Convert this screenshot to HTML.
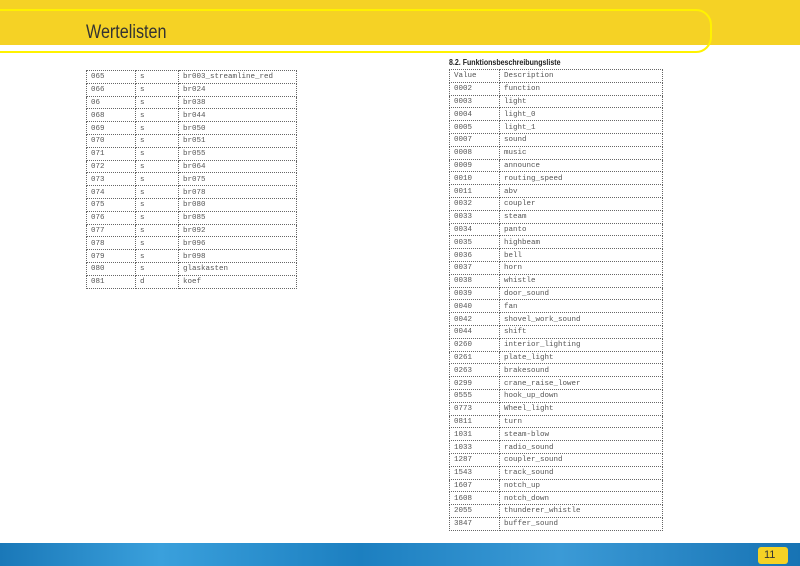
<!DOCTYPE html>
<html><head><meta charset="utf-8"><style>
body{margin:0;width:800px;height:566px;position:relative;overflow:hidden;background:#fff;font-family:"Liberation Mono",monospace;}
.band{position:absolute;left:0;top:0;width:800px;height:45px;background:#f5d225;}
.outline{position:absolute;left:-20px;top:9px;width:728px;height:40px;border:2px solid #fff200;border-radius:16px;}
.title{position:absolute;left:86px;top:22px;font-family:"Liberation Sans",sans-serif;font-size:19px;color:#333;transform:scaleX(0.85);transform-origin:left top;}
table{position:absolute;border-collapse:collapse;font-size:7.5px;color:#555;}
td{border:1px dotted #666;height:10.8px;padding:1px 0 0 4px;line-height:10px;vertical-align:middle;}
.h{position:absolute;left:449px;top:58px;font-family:"Liberation Sans",sans-serif;font-weight:bold;font-size:8px;color:#222;transform:scaleX(0.88);transform-origin:left top;}
.foot{position:absolute;left:0;top:543px;width:800px;height:23px;background:linear-gradient(90deg,#1a78b8,#3aa0dc 20%,#1c7fc0 45%,#3b9ad6 70%,#1773b4);}
.pn{position:absolute;left:758px;top:547px;width:30px;height:17px;background:#f5d225;border-radius:3px;font-family:"Liberation Sans",sans-serif;font-size:11px;color:#333;padding-left:6px;line-height:17px;box-sizing:border-box;}
</style></head><body>
<div class="band"></div><div class="outline"></div>
<div class="title">Wertelisten</div>
<table style="left:86px;top:70px;width:211px">
<colgroup><col style="width:49px"><col style="width:43px"><col></colgroup>
<tr><td>065</td><td>s</td><td>br003_streamline_red</td></tr>
<tr><td>066</td><td>s</td><td>br024</td></tr>
<tr><td>06</td><td>s</td><td>br038</td></tr>
<tr><td>068</td><td>s</td><td>br044</td></tr>
<tr><td>069</td><td>s</td><td>br050</td></tr>
<tr><td>070</td><td>s</td><td>br051</td></tr>
<tr><td>071</td><td>s</td><td>br055</td></tr>
<tr><td>072</td><td>s</td><td>br064</td></tr>
<tr><td>073</td><td>s</td><td>br075</td></tr>
<tr><td>074</td><td>s</td><td>br078</td></tr>
<tr><td>075</td><td>s</td><td>br080</td></tr>
<tr><td>076</td><td>s</td><td>br085</td></tr>
<tr><td>077</td><td>s</td><td>br092</td></tr>
<tr><td>078</td><td>s</td><td>br096</td></tr>
<tr><td>079</td><td>s</td><td>br098</td></tr>
<tr><td>080</td><td>s</td><td>glaskasten</td></tr>
<tr><td>081</td><td>d</td><td>koef</td></tr>
</table>
<div class="h">8.2. Funktionsbeschreibungsliste</div>
<table style="left:449px;top:69px;width:214px">
<colgroup><col style="width:50px"><col></colgroup>
<tr><td>Value</td><td>Description</td></tr>
<tr><td>0002</td><td>function</td></tr>
<tr><td>0003</td><td>light</td></tr>
<tr><td>0004</td><td>light_0</td></tr>
<tr><td>0005</td><td>light_1</td></tr>
<tr><td>0007</td><td>sound</td></tr>
<tr><td>0008</td><td>music</td></tr>
<tr><td>0009</td><td>announce</td></tr>
<tr><td>0010</td><td>routing_speed</td></tr>
<tr><td>0011</td><td>abv</td></tr>
<tr><td>0032</td><td>coupler</td></tr>
<tr><td>0033</td><td>steam</td></tr>
<tr><td>0034</td><td>panto</td></tr>
<tr><td>0035</td><td>highbeam</td></tr>
<tr><td>0036</td><td>bell</td></tr>
<tr><td>0037</td><td>horn</td></tr>
<tr><td>0038</td><td>whistle</td></tr>
<tr><td>0039</td><td>door_sound</td></tr>
<tr><td>0040</td><td>fan</td></tr>
<tr><td>0042</td><td>shovel_work_sound</td></tr>
<tr><td>0044</td><td>shift</td></tr>
<tr><td>0260</td><td>interior_lighting</td></tr>
<tr><td>0261</td><td>plate_light</td></tr>
<tr><td>0263</td><td>brakesound</td></tr>
<tr><td>0299</td><td>crane_raise_lower</td></tr>
<tr><td>0555</td><td>hook_up_down</td></tr>
<tr><td>0773</td><td>Wheel_light</td></tr>
<tr><td>0811</td><td>turn</td></tr>
<tr><td>1031</td><td>steam-blow</td></tr>
<tr><td>1033</td><td>radio_sound</td></tr>
<tr><td>1287</td><td>coupler_sound</td></tr>
<tr><td>1543</td><td>track_sound</td></tr>
<tr><td>1607</td><td>notch_up</td></tr>
<tr><td>1608</td><td>notch_down</td></tr>
<tr><td>2055</td><td>thunderer_whistle</td></tr>
<tr><td>3847</td><td>buffer_sound</td></tr>
</table>
<div class="foot"></div>
<div class="pn">11</div>
</body></html>
